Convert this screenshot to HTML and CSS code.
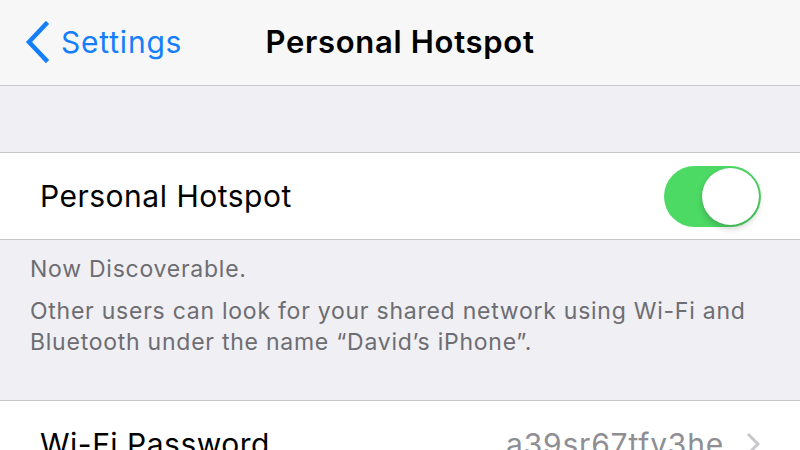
FILE: index.html
```html
<!DOCTYPE html>
<html lang="en">
<head>
<meta charset="UTF-8" />
<meta name="viewport" content="width=device-width, initial-scale=1" />
<title>Personal Hotspot</title>
<link rel="stylesheet" href="styles.css">
</head>
<body>

  <header class="navbar">
    <a class="back" href="#">
      <svg class="back-chevron" width="26" height="42" viewBox="0 0 26 42">
        <path d="M22 3 L5 21 L22 39" fill="none" stroke="#147efb" stroke-width="4.5" stroke-linecap="square" />
      </svg>
      <span>Settings</span>
    </a>
    <h1>Personal Hotspot</h1>
  </header>

  <div class="spacer"></div>

  <section class="group">
    <div class="row">
      <span class="label">Personal Hotspot</span>
      <label class="switch on">
        <span class="knob"></span>
      </label>
    </div>
  </section>

  <div class="footer-note">
    <p class="status">Now Discoverable.</p>
    <p>Other users can look for your shared network using Wi-Fi and Bluetooth under the name “David’s iPhone”.</p>
  </div>

  <section class="group">
    <div class="row">
      <span class="label">Wi-Fi Password</span>
      <span class="value">a39sr67tfy3he</span>
      <svg class="chevron" width="14" height="24" viewBox="0 0 14 24">
        <path d="M2 2 L12 12 L2 22" fill="none" stroke="#c7c7cc" stroke-width="3" />
      </svg>
    </div>
  </section>

</body>
</html>
```

FILE: styles.css
```css
/* Reset + basic */
* {
  box-sizing: border-box;
}
body {
  margin: 0; padding: 0;
  font-family: Inter, "Noto Sans", Arial, sans-serif;
  background: #efeff4;
  color: #000;
  overflow: hidden;
}

/* Nav bar */
.navbar {
  height: 86px;
  background: #f7f7f8;
  border-bottom: 1px solid #c8c7cc;
  position: relative;
  display: flex;
  align-items: center;
}
.back {
  display: flex;
  align-items: center;
  gap: 11px;
  padding-left: 24px;
  color: #147efb;
  text-decoration: none;
  font-size: 30px;
  letter-spacing: 0.8px;
  margin-top: -2px;
}
.back-chevron {
  display: block;
}
.navbar h1 {
  position: absolute;
  left: 0; right: 0;
  text-align: center;
  margin: -2px 0 0;
  font-size: 31px;
  font-weight: 600;
  letter-spacing: 0.7px;
}

.spacer {
  height: 66px;
}

/* Groups */
.group {
  background: #fff;
  border-top: 1px solid #c8c7cc;
  border-bottom: 1px solid #c8c7cc;
}
.row {
  height: 86px;
  display: flex;
  align-items: center;
  padding: 0 40px;
}
.label {
  font-size: 30px;
  letter-spacing: 0.5px;
  flex-grow: 1;
}
.value {
  font-size: 30px;
  letter-spacing: 0.8px;
  color: #8e8e93;
  margin-right: 22px;
}
.chevron {
  display: block;
}

/* Switch */
.switch {
  width: 97px;
  height: 61px;
  border-radius: 31px;
  background: #4cd964;
  position: relative;
  margin-right: -1px;
}
.switch .knob {
  position: absolute;
  top: 2px;
  right: 2px;
  width: 57px;
  height: 57px;
  border-radius: 50%;
  background: #fff;
  box-shadow: 0 4px 6px rgba(0 0 0 / 0.18), 0 0 1px rgba(0 0 0 / 0.2);
}

/* Footer note */
.footer-note {
  padding: 14px 30px 20px;
  height: 160px;
  color: #6d6d72;
  font-size: 23px;
  line-height: 31px;
  letter-spacing: 0.75px;
}
.footer-note p {
  margin: 0;
}
.footer-note .status {
  margin-bottom: 11px;
}
```
